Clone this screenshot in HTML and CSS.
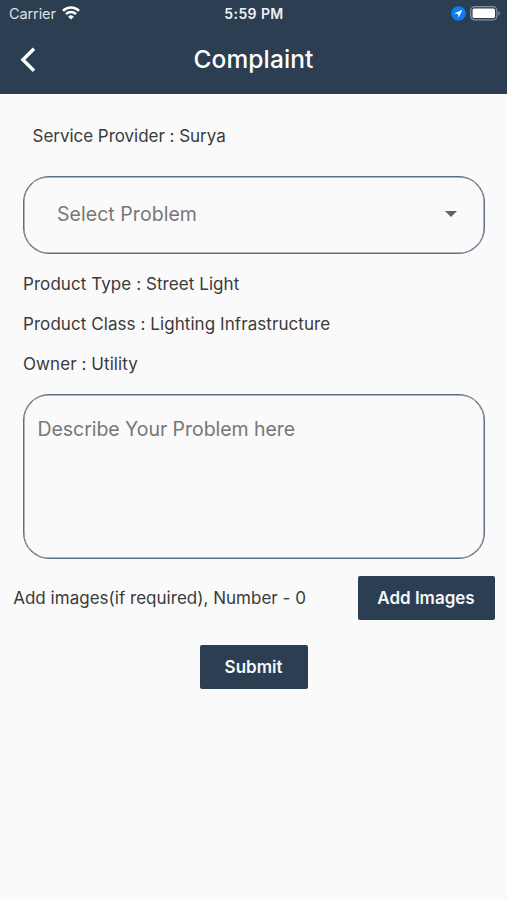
FILE: index.html
```html
<!DOCTYPE html>
<html lang="en">
<head>
<meta charset="utf-8">
<title>Complaint</title>
<link rel="stylesheet" href="styles.css">
</head>
<body>
<header class="header">
  <div class="status">
    <div class="status-left">
      <span class="carrier">Carrier</span>
      <svg class="wifi" viewBox="0 0 18 14" width="18" height="14" fill="none" stroke="#fff" stroke-width="2.5"><path d="M1 4.9a11.4 11.4 0 0 1 16 0M4 8.1a7.2 7.2 0 0 1 10 0"/><path d="M9 13.6L6.1 10.7a4.1 4.1 0 0 1 5.8 0z" fill="#fff" stroke="none"/></svg>
    </div>
    <span class="time">5:59 PM</span>
    <div class="status-right">
      <svg viewBox="0 0 15 15" width="15" height="15"><circle cx="7.5" cy="7.5" r="7.3" fill="#0a7cf5"/><path d="M11.4 3.7L3.2 7.4l3.9.5.5 3.9z" fill="#fff"/></svg>
      <svg viewBox="0 0 31 15" width="31" height="15"><rect x=".7" y=".7" width="26.2" height="13.2" rx="4" fill="none" stroke="#8793a0" stroke-width="1.2"/><rect x="2.6" y="2.5" width="22.4" height="9.6" rx="1.6" fill="#fff"/><path d="M28.4 5v4.6c2-.9 2-3.7 0-4.6z" fill="#8793a0"/></svg>
    </div>
  </div>
  <div class="bar">
    <svg class="back" viewBox="0 0 16 26" width="16" height="26" fill="none" stroke="#fff" stroke-width="3.4"><path d="M14 1.8L2.9 12.8 14 23.8"/></svg>
    <h1 class="title">Complaint</h1>
  </div>
</header>
<main class="content">
  <p class="text provider">Service Provider : Surya</p>
  <div class="select">
    <span>Select Problem</span>
    <svg viewBox="0 0 12 6" width="12" height="6"><path d="M0 0h12L6 6z" fill="#616161"/></svg>
  </div>
  <div class="details">
    <p class="text type">Product Type : Street Light</p>
    <p class="text class">Product Class : Lighting Infrastructure</p>
    <p class="text owner">Owner : Utility</p>
  </div>
  <div class="describe"><span>Describe Your Problem here</span></div>
  <div class="images">
    <span class="text count">Add images(if required), Number - 0</span>
    <button class="button add"><span>Add Images</span></button>
  </div>
  <button class="button submit"><span>Submit</span></button>
</main>
</body>
</html>
```
FILE: styles.css
```css
* { box-sizing: border-box; }
body {
  margin: 0;
  min-height: 900px;
  background: #fafafa;
  color: #3b3b3b;
  font-family: Inter, "Liberation Sans", sans-serif;
}
p, h1 { margin: 0; font-weight: 400; }
svg { display: block; flex: none; }
.header { height: 94px; background: #2b3e52; color: #fff; }
.status {
  display: grid;
  grid-template-columns: 1fr auto 1fr;
  height: 27px;
  align-items: center;
  padding: 0 6px 0 9px;
}
.status-left, .status-right { display: flex; align-items: center; }
.status-left { gap: 6px; }
.wifi { margin-bottom: 1px; }
.status-right { justify-content: flex-end; gap: 4px; }
.carrier { font-size: 14.5px; color: #dce2e8; letter-spacing: -.1px; }
.time { font-size: 14px; font-weight: 600; color: #eef2f6; letter-spacing: .4px; margin-right: 2px; }
.bar {
  display: grid;
  grid-template-columns: 60px 1fr 60px;
  height: 65px;
  align-items: center;
}
.back { margin-left: 20px; }
.title { text-align: center; font-size: 24.5px; font-weight: 500; letter-spacing: .1px; padding-bottom: 1px; }
.content { display: flex; flex-direction: column; padding: 0 22.5px; }
.text { font-size: 17px; line-height: 20px; letter-spacing: .07px; white-space: nowrap; }
.provider { margin: 32px 0 29.5px 10px; letter-spacing: -.03px; }
.select, .describe {
  border: 1px solid #5e7083;
  box-shadow: inset 0 0 0 .5px #5e7083;
  border-radius: 26px;
  color: #777;
  font-size: 19.5px;
  line-height: 24px;
  letter-spacing: .05px;
}
.select {
  display: flex;
  align-items: center;
  justify-content: space-between;
  height: 78px;
  padding: 0 27px 1px 33.5px;
}
.details { display: flex; flex-direction: column; gap: 20.2px; margin: 20.1px 0 20.3px .5px; }
.describe { height: 165px; padding: 22px 14px; letter-spacing: -.05px; }
.images {
  display: flex;
  align-items: center;
  justify-content: space-between;
  margin: 17px -10px 25px;
}
.count { padding-left: .7px; letter-spacing: .02px; }
.button {
  height: 44px;
  padding: 0;
  border: 0;
  border-radius: 2px;
  background: #2b3e52;
  color: #f4f8fc;
  font: 600 17px/20px Inter, "Liberation Sans", sans-serif;
  letter-spacing: 0;
}
.add { width: 137px; }
.submit { width: 108px; align-self: center; padding-bottom: 1px; }
```
